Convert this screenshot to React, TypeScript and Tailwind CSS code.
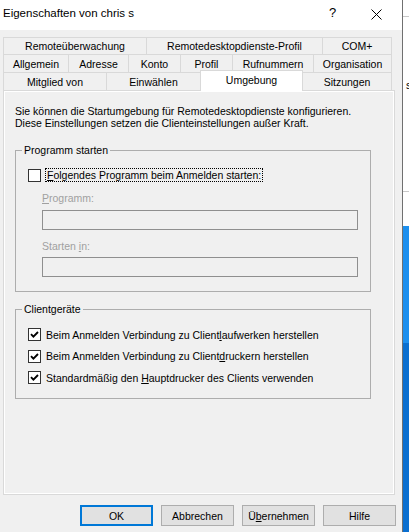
import { ReactNode } from "react";

const font = "font-['Liberation_Sans',Arial,sans-serif]";

function Tab(props: { w: string; label: string; last?: boolean }) {
  return (
    <div
      className={`${props.w} flex items-center justify-center border-t border-l border-[#d9d9d9] ${
        props.last ? "border-r" : ""
      }`}
    >
      {props.label}
    </div>
  );
}

function CheckBox(props: { checked?: boolean }) {
  return (
    <div className="flex h-[13px] w-[13px] shrink-0 items-center justify-center border border-[#333] bg-white">
      {props.checked && (
        <svg width="11" height="11" viewBox="0 0 11 11">
          <path
            d="M2 5.2 L4.4 7.6 L9 3"
            fill="none"
            stroke="#000"
            strokeWidth="1.9"
          />
        </svg>
      )}
    </div>
  );
}

function Btn(props: { children: ReactNode; primary?: boolean }) {
  return (
    <button
      className={`flex h-[21px] w-[73px] items-center justify-center bg-[#e1e1e1] ${
        props.primary ? "border-2 border-[#0078d7]" : "border border-[#adadad]"
      }`}
    >
      {props.children}
    </button>
  );
}

export default function App() {
  return (
    <div className={`flex h-[532px] w-[409px] overflow-hidden text-[10.5px] leading-[12px] text-black ${font}`}>
      {/* dialog */}
      <div className="flex h-full w-[403px] shrink-0 flex-col border-r border-[#707070] bg-[#f0f0f0]">
        {/* title bar */}
        <div className="flex h-[30px] shrink-0 bg-white pt-[5px]">
          <span className="pl-[3px] text-[11.5px] leading-[16px]">
            Eigenschaften von chris s
          </span>
          <span className="ml-[195px] text-[13px] leading-[16px]">?</span>
          <svg className="ml-[35px] mt-[4px]" width="11" height="11" viewBox="0 0 11 11">
            <path d="M0.5 0.5 L10.5 10.5 M10.5 0.5 L0.5 10.5" stroke="#000" strokeWidth="1" />
          </svg>
        </div>

        {/* tabs */}
        <div className="mt-[7px] flex flex-col pl-[3px]">
          <div className="flex h-[17px]">
            <Tab w="w-[143px]" label="Remoteüberwachung" />
            <Tab w="w-[176px]" label="Remotedesktopdienste-Profil" />
            <Tab w="w-[70px]" label="COM+" last />
          </div>
          <div className="flex h-[18px]">
            <Tab w="w-[65px]" label="Allgemein" />
            <Tab w="w-[60px]" label="Adresse" />
            <Tab w="w-[52px]" label="Konto" />
            <Tab w="w-[52px]" label="Profil" />
            <Tab w="w-[81px]" label="Rufnummern" />
            <Tab w="w-[79px]" label="Organisation" last />
          </div>
          <div className="flex h-[18px] items-start">
            <div className="flex h-[18px] w-[103px] items-center justify-center border-t border-l border-[#d9d9d9]">
              Mitglied von
            </div>
            <div className="flex h-[18px] w-[94px] items-center justify-center border-t border-l border-[#d9d9d9]">
              Einwählen
            </div>
            <div className="relative z-10 -mt-[2px] flex h-[21px] w-[103px] items-center justify-center border-x border-t border-[#d9d9d9] bg-white pb-[2px]">
              Umgebung
            </div>
            <div className="flex h-[18px] w-[89px] items-center justify-center border-t border-r border-[#d9d9d9]">
              Sitzungen
            </div>
          </div>
        </div>

        {/* panel */}
        <div className="ml-[3px] flex h-[405px] w-[392px] shrink-0 flex-col border border-[#d9d9d9] px-[11px] pt-[14px] shadow-[inset_1px_1px_0_#fff,inset_-1px_-1px_0_#fff]">
          <p>
            Sie können die Startumgebung für Remotedesktopdienste konfigurieren.
            <br />
            Diese Einstellungen setzen die Clienteinstellungen außer Kraft.
          </p>

          <fieldset className="mt-[15px] w-[356px] border border-[#adadad] pb-[14px]">
            <legend className="ml-[6px] px-[2px]">Programm starten</legend>
            <div className="mt-[12px] flex h-[14px] items-center pl-[12px]">
              <CheckBox />
              <span className="ml-[4px] border border-dotted border-black px-px leading-[12px]">
                <u>F</u>olgendes Programm beim Anmelden starten:
              </span>
            </div>
            <div className="ml-[26px] mt-[10px] text-[#a0a0a0]">
              <u>P</u>rogramm:
            </div>
            <div className="ml-[26px] mt-[6px] h-[20px] w-[316px] border border-[#8f8f8f] bg-[#f0f0f0]" />
            <div className="ml-[26px] mt-[10px] text-[#a0a0a0]">
              Starten <u>i</u>n:
            </div>
            <div className="ml-[26px] mt-[5px] h-[20px] w-[316px] border border-[#8f8f8f] bg-[#f0f0f0]" />
          </fieldset>

          <fieldset className="mt-[11px] w-[356px] border border-[#adadad] pb-[10px]">
            <legend className="ml-[6px] px-[2px]">Clientgeräte</legend>
            <div className="mt-[9px] flex flex-col pl-[12px]">
              <div className="flex h-[21px] items-center gap-[5px]">
                <CheckBox checked />
                <span>
                  Beim Anmelden Verbindung zu Client<u>l</u>aufwerken herstellen
                </span>
              </div>
              <div className="flex h-[22px] items-center gap-[5px]">
                <CheckBox checked />
                <span>
                  Beim Anmelden Verbindung zu Client<u>d</u>ruckern herstellen
                </span>
              </div>
              <div className="flex h-[21px] items-center gap-[5px]">
                <CheckBox checked />
                <span>
                  Standardmäßig den <u>H</u>auptdrucker des Clients verwenden
                </span>
              </div>
            </div>
          </fieldset>
        </div>

        {/* buttons */}
        <div className="mt-[10px] flex justify-end gap-[8px] pr-[6px]">
          <Btn primary>OK</Btn>
          <Btn>Abbrechen</Btn>
          <Btn>
            Ü<u>b</u>ernehmen
          </Btn>
          <Btn>Hilfe</Btn>
        </div>
      </div>

      {/* what shows behind the dialog */}
      <div className="flex h-full w-[6px] flex-col bg-white">
        <div className="h-[16px]" />
        <div className="h-px bg-[#c8c8c8]" />
        <div className="h-[62px]" />
        <div className="h-[12px] overflow-hidden pl-[3px] text-[11px]">s</div>
        <div className="h-[100px]" />
        <div className="h-px bg-[#c8c8c8]" />
        <div className="h-[34px]" />
        <div className="h-[117px] bg-[#1c8fee]" />
        <div className="flex-1 bg-[#0a6fd0]" />
      </div>
    </div>
  );
}
